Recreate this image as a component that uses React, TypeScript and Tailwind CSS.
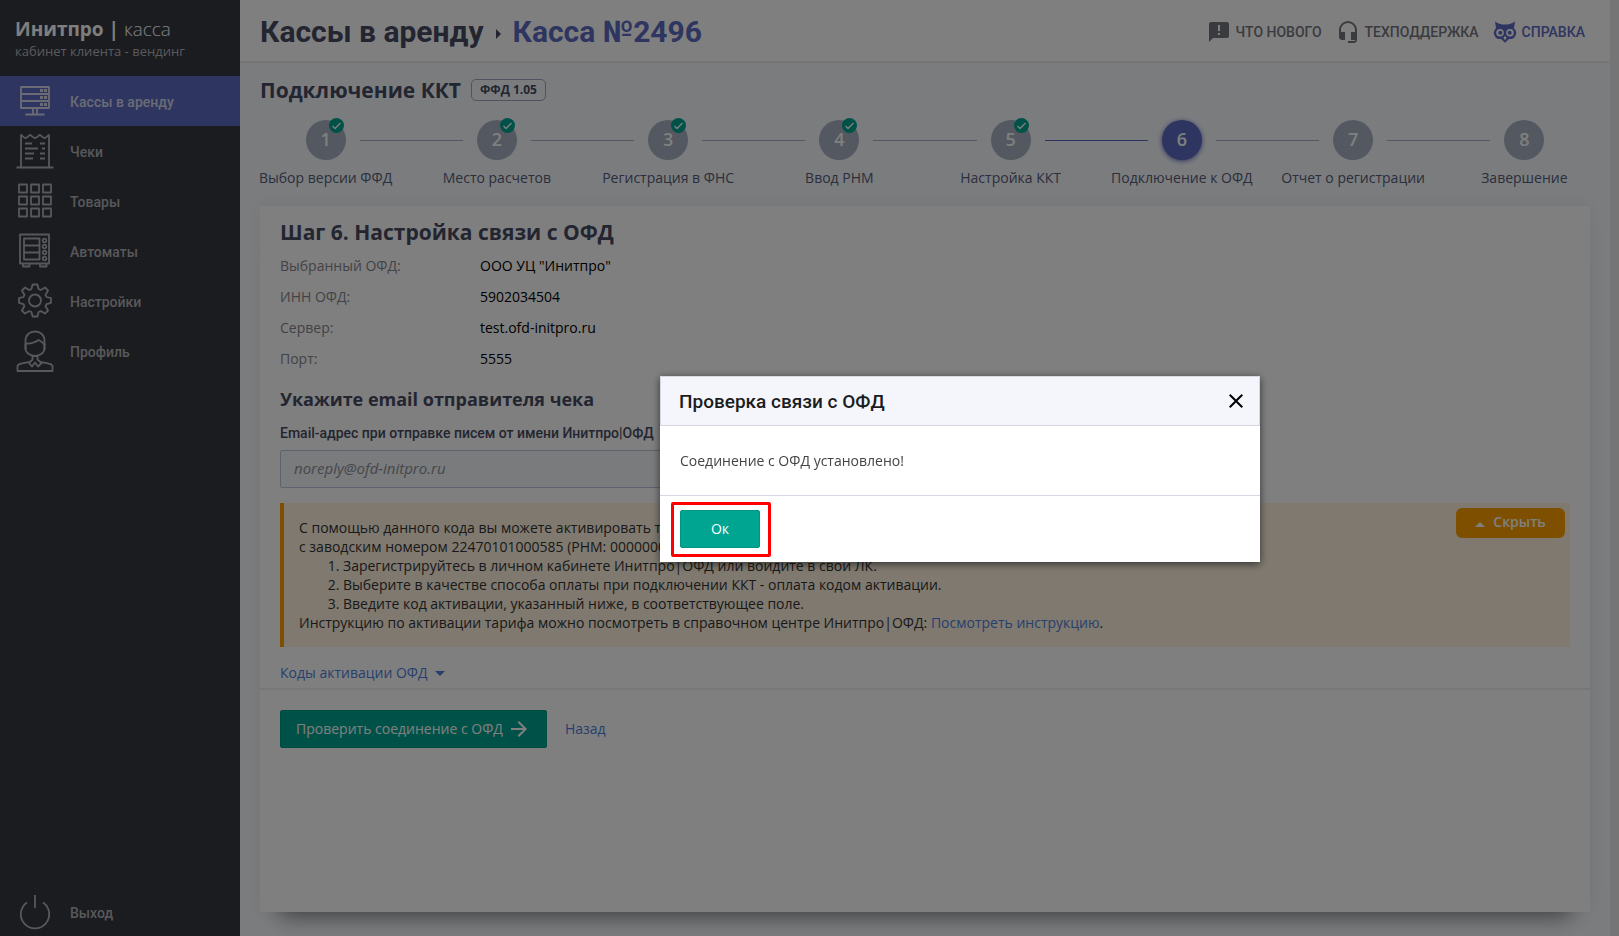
import type { ReactNode } from "react"
import { MdAnnouncement, MdArrowForward, MdClose, MdHeadsetMic } from "react-icons/md"

const steps = [
  "Выбор версии ФФД",
  "Место расчетов",
  "Регистрация в ФНС",
  "Ввод РНМ",
  "Настройка ККТ",
  "Подключение к ОФД",
  "Отчет о регистрации",
  "Завершение",
]
const currentStep = 6

const ofdInfo = [
  { label: "Выбранный ОФД:", value: 'ООО УЦ "Инитпро"' },
  { label: "ИНН ОФД:", value: "5902034504" },
  { label: "Сервер:", value: "test.ofd-initpro.ru" },
  { label: "Порт:", value: "5555" },
]

function MenuIcon({ children }: { children: ReactNode }) {
  return (
    <svg
      viewBox="0 0 40 42"
      className="h-[42px] w-10 shrink-0"
      fill="none"
      stroke="currentColor"
      strokeWidth="1.8"
      strokeLinejoin="round"
      aria-hidden="true"
    >
      {children}
    </svg>
  )
}

const menu = [
  {
    title: "Кассы в аренду",
    active: true,
    icon: (
      <MenuIcon>
        <path d="M6 7h28v21H6zM6 14h28M6 21h28M18 28v6M22 28v6M10.500 34.500h19" />
        <path d="M25 10.500h3M29 10.500h3M25 17.500h3M29 17.500h3M25 24.500h3M29 24.500h3" strokeWidth="3" />
      </MenuIcon>
    ),
  },
  {
    title: "Чеки",
    icon: (
      <MenuIcon>
        <path d="M6 37V5c1.500 0 2 3 4.500 3S13.500 5 15 5s2.500 3 5 3 3.500-3 5-3 2 3 4.500 3S32.500 5 34 5v32M1.500 37.500h37" />
        <path d="M10 13.500h7M10 18.500h13M10 23.500h9M10 28.500h8M25 13.500h5M27 18.500h3M25 23.500h5M25 28.500h5" />
      </MenuIcon>
    ),
  },
  {
    title: "Товары",
    icon: (
      <MenuIcon>
        <path d="M4 4.500h8v8H4zM16 4.500h8v8h-8zM28 4.500h8v8h-8zM4 16.500h8v8H4zM16 16.500h8v8h-8zM28 16.500h8v8h-8zM4 28.500h8v8H4zM16 28.500h8v8h-8zM28 28.500h8v8h-8z" />
      </MenuIcon>
    ),
  },
  {
    title: "Автоматы",
    icon: (
      <MenuIcon>
        <path d="M5 4.500h29v29H5zM9 8.500h15.500v21H9zM9 15.500h15.500M9 22.500h15.500M8 33.500v3h6.500v-3M25 33.500v3h6.500v-3" />
        <circle cx="29.500" cy="10.500" r="1.800" />
        <circle cx="29.500" cy="16.500" r="1.800" />
        <circle cx="29.500" cy="22.500" r="1.800" />
        <circle cx="29.500" cy="28.500" r="1.800" />
      </MenuIcon>
    ),
  },
  {
    title: "Настройки",
    icon: (
      <MenuIcon>
        <circle cx="20" cy="20.500" r="6" />
        <path d="M17.600 4.500h4.800l1.200 4.600 2.200.9 4.200-2.500 3.100 3.100-2.600 4.200 1 2.200 4.500 1.200v4.700l-4.500 1.200-1 2.200 2.600 4.200-3.200 3.100-4.100-2.500-2.200.9-1.200 4.500h-4.800l-1.200-4.500-2.200-.9-4.200 2.500-3.100-3.100 2.500-4.200-.9-2.200L4 22.900v-4.700l4.500-1.200.9-2.200-2.500-4.200L10 7.500l4.200 2.500 2.200-.9z" />
      </MenuIcon>
    ),
  },
  {
    title: "Профиль",
    icon: (
      <MenuIcon>
        <path d="M10.500 20V11c0-6 4-9.500 9.500-9.500s9.500 3.500 9.500 9.500v9" />
        <path d="M10.500 13.500C16 14 20 12.500 23.500 10c2 1 4.500 2 6 5M10.500 14v4.500c0 4 4.500 7.500 9.500 7.500s9.500-3.500 9.500-7.500V14M17.500 26v3.500L14 33l3 3.500 3-4 3 4 3.500-3.500-4-3.500V26M15 32C6 33.500 2.500 34 2.500 36.500V41h35v-4.500c0-2.500-3.500-3-12.500-4.500" />
      </MenuIcon>
    ),
  },
]

function OwlIcon() {
  return (
    <svg viewBox="0 0 24 24" className="size-6" fill="currentColor" aria-hidden="true">
      <path
        fillRule="evenodd"
        d="M2 1.500C5.500 4 9 4.500 12 4.500S18.500 4 22 1.500l-1 6.700A6.200 6.200 0 0 1 16 19l-4 3.800L8 19A6.200 6.200 0 0 1 3 8.200zM7 9a3.800 3.800 0 1 0 0 7.600A3.800 3.800 0 0 0 7 9zm10 0a3.800 3.800 0 1 0 0 7.600A3.800 3.800 0 0 0 17 9zm-5 7l-1.700 2 1.700 2 1.700-2z"
      />
      <circle cx="7.300" cy="12.800" r="2" />
      <circle cx="16.700" cy="12.800" r="2" />
    </svg>
  )
}

function Sidebar() {
  return (
    <aside className="flex w-60 shrink-0 flex-col bg-[#363840] font-['Roboto',sans-serif] text-sm font-medium">
      <div className="h-[76px] pl-[15px] pt-[17px] font-['Open_Sans',sans-serif]">
        <p className="text-[19px] leading-6 font-bold text-white">
          Инитпро | <span className="font-light">касса</span>
        </p>
        <p className="text-[13px] leading-5 font-normal text-[#b4b5ba]">кабинет клиента - вендинг</p>
      </div>
      <nav>
        {menu.map((item) => (
          <a
            key={item.title}
            href="#"
            className={`flex h-[50px] items-center gap-[15px] pl-[15px] ${
              item.active ? "bg-[#5c6bc0] text-[#d4d7ea]" : "text-[#b0b1b5]"
            }`}
          >
            {item.icon}
            <span className="pt-0.5">{item.title}</span>
          </a>
        ))}
      </nav>
      <a href="#" className="mt-auto flex h-12 items-center gap-[15px] pl-[15px] text-[#b0b1b5]">
        <MenuIcon>
          <path d="M12 11.500A14.200 14.200 0 1 0 28 11.500M20 4v13" />
        </MenuIcon>
        <span className="pt-0.5">Выход</span>
      </a>
    </aside>
  )
}

function Header() {
  return (
    <header className="flex h-[63px] items-center justify-between border-b-2 border-[#ececec] bg-white pt-0.5 pr-[25px] pl-5 font-['Roboto',sans-serif]">
      <h1 className="flex items-center gap-3 text-3xl font-bold text-[#474b62]">
        Кассы в аренду
        <svg viewBox="0 0 5 10" className="mt-1 h-2.5 w-[5px]" fill="currentColor" aria-hidden="true">
          <path d="M0 0l5 5-5 5z" />
        </svg>
        <span className="text-[#5c6bc0]">Касса №2496</span>
      </h1>
      <nav className="flex items-center gap-3.5 text-sm font-medium text-[#75777f]">
        <a href="#" className="flex items-center gap-[5px]">
          <MdAnnouncement className="size-6" />
          ЧТО НОВОГО
        </a>
        <a href="#" className="flex items-center gap-[5px]">
          <MdHeadsetMic className="size-6" />
          ТЕХПОДДЕРЖКА
        </a>
        <a href="#" className="flex items-center gap-[5px] text-[#5c6bc0]">
          <OwlIcon />
          СПРАВКА
        </a>
      </nav>
    </header>
  )
}

function Stepper() {
  return (
    <ol className="mt-[17px] grid grid-cols-8">
      {steps.map((title, i) => {
        const n = i + 1
        return (
          <li key={title} className="flex flex-col items-center">
            <div className="flex w-full items-center">
              <span
                className={`h-px flex-1 ${
                  n === 1 ? "bg-transparent" : n === currentStep ? "bg-[#5c6bc0]" : "bg-[#a9b0c9]"
                }`}
              />
              <span
                className={`relative mx-3.5 flex size-10 items-center justify-center rounded-full pb-0.5 text-lg font-semibold text-white ${
                  n === currentStep ? "bg-[#5c6bc0] shadow-[0_1px_5px_#5c6bc0]" : "bg-[#a8b0c3]"
                }`}
              >
                {n}
                {n < currentStep && (
                  <svg viewBox="0 0 15 15" className="absolute -top-0.5 right-0.5 size-[15px]" aria-hidden="true">
                    <circle cx="7.500" cy="7.500" r="7.500" fill="#00a591" />
                    <path d="M3.500 8l2.500 2.500L11.500 5" fill="none" stroke="#fff" strokeWidth="1.300" />
                  </svg>
                )}
              </span>
              <span
                className={`h-px flex-1 ${
                  n === steps.length ? "bg-transparent" : n === currentStep - 1 ? "bg-[#5c6bc0]" : "bg-[#a9b0c9]"
                }`}
              />
            </div>
            <span className="mt-2 text-sm text-[#565d78]">{title}</span>
          </li>
        )
      })}
    </ol>
  )
}

function ActivationNotice() {
  return (
    <div className="mt-[15px] flex items-start border-l-4 border-[#ff9f00] bg-[#fff3e0]">
      <div className="flex-1 py-[15px] pl-[15px] leading-[19px] text-[#333]">
        <p>
          С помощью данного кода вы можете активировать тариф
          <br />
          с заводским номером 22470101000585 (РНМ: 000000000)
        </p>
        <ol className="list-decimal pl-11">
          <li>Зарегистрируйтесь в личном кабинете Инитпро|ОФД или войдите в свой ЛК.</li>
          <li>Выберите в качестве способа оплаты при подключении ККТ - оплата кодом активации.</li>
          <li>Введите код активации, указанный ниже, в соответствующее поле.</li>
        </ol>
        <p>
          Инструкцию по активации тарифа можно посмотреть в справочном центре Инитпро|ОФД:{" "}
          <a href="#" className="text-[#4f7fdb]">
            Посмотреть инструкцию
          </a>
          .
        </p>
      </div>
      <button
        type="button"
        className="m-[5px] flex h-[30px] w-[109px] items-center justify-center gap-2 rounded-md bg-[#ff9f00] pb-0.5 font-semibold text-white"
      >
        <svg viewBox="0 0 10 5" className="mt-1 h-[5px] w-2.5" fill="currentColor" aria-hidden="true">
          <path d="M0 5l5-5 5 5z" />
        </svg>
        Скрыть
      </button>
    </div>
  )
}

function ConnectionDialog() {
  return (
    <div className="fixed inset-0 flex items-center justify-center bg-black/50 pt-0.5 pl-[301px]">
      <div
        role="dialog"
        aria-modal="true"
        aria-labelledby="dialog-title"
        className="w-[600px] bg-white shadow-[0_2px_8px_rgba(0,0,0,0.6)]"
      >
        <div className="flex h-[50px] items-center justify-between border border-[#d6d8e4] bg-[#f4f6fb] pr-[11px] pl-[18px]">
          <h2 id="dialog-title" className="pt-0.5 font-['Roboto',sans-serif] text-[19px] font-medium text-[#1b1c20]">
            Проверка связи с ОФД
          </h2>
          <button type="button" aria-label="Закрыть">
            <MdClose className="size-6 text-black" />
          </button>
        </div>
        <p className="flex h-[70px] items-center border-b border-[#d6d8e4] px-5 text-[#444]">
          Соединение с ОФД установлено!
        </p>
        <div className="px-5 py-3.5">
          <div className="relative w-20">
            <button
              type="button"
              className="h-[38px] w-20 rounded-xs border border-[#009482] bg-[#00a591] text-white"
            >
              Ок
            </button>
            <span className="pointer-events-none absolute -top-2 -right-[11px] -bottom-[9px] -left-[9px] rounded-xs border-3 border-[#ff0000]" />
          </div>
        </div>
      </div>
    </div>
  )
}

export default function App() {
  return (
    <div className="flex min-h-screen font-['Open_Sans',sans-serif] text-sm">
      <Sidebar />
      <div className="flex min-w-0 flex-1 flex-col bg-[#f6f9fd]">
        <Header />
        <div className="mt-3.5 flex items-center gap-2.5 px-5">
          <h2 className="text-[21px] leading-[26px] font-bold text-[#474b62]">Подключение ККТ</h2>
          <span className="rounded-[5px] border border-[#a0a5bb] px-2 text-xs leading-5 font-bold text-[#474b62]">
            ФФД 1.05
          </span>
        </div>
        <Stepper />
        <main className="mx-5 mt-[18px] mb-6 flex-1 bg-white shadow-[0_25px_20px_-20px_rgba(0,0,0,0.45),0_0_20px_rgba(0,0,0,0.06)]">
          <div className="border-b-2 border-[#efeff1] px-5 pt-[11px] pb-[5px]">
            <h2 className="text-[21px] leading-[30px] font-bold text-[#474b62]">Шаг 6. Настройка связи с ОФД</h2>
            <dl className="mt-[3px]">
              {ofdInfo.map((row) => (
                <div key={row.label} className="flex leading-[31px]">
                  <dt className="w-[200px] text-[#85868c]">{row.label}</dt>
                  <dd className="text-black">{row.value}</dd>
                </div>
              ))}
            </dl>
            <h3 className="mt-[9px] text-lg leading-8 font-bold text-[#474b62]">Укажите email отправителя чека</h3>
            <label
              htmlFor="sender-email"
              className="mt-2 block font-['Roboto',sans-serif] leading-5 font-medium text-[#474b62]"
            >
              Email-адрес при отправке писем от имени Инитпро|ОФД
            </label>
            <input
              id="sender-email"
              type="email"
              placeholder="noreply@ofd-initpro.ru"
              className="mt-[7px] block h-[38px] w-[620px] rounded-xs border border-[#b9c4dc] bg-[#f4f6fb] px-[13px] pb-0.5 text-[15px] placeholder:text-[#8d8e96] placeholder:italic"
            />
            <ActivationNotice />
            <button type="button" className="mt-4 flex items-center gap-[7px] text-[#4f7fdb]">
              Коды активации ОФД
              <svg viewBox="0 0 10 5" className="h-[5px] w-2.5" fill="currentColor" aria-hidden="true">
                <path d="M0 0h10L5 5z" />
              </svg>
            </button>
          </div>
          <div className="flex items-center gap-[18px] px-5 py-5">
            <button
              type="button"
              className="flex h-[38px] items-center gap-1 rounded-xs border border-[#009482] bg-[#00a591] px-[15px] text-white"
            >
              Проверить соединение с ОФД
              <MdArrowForward className="size-6" />
            </button>
            <a href="#" className="text-[#4f7fdb]">
              Назад
            </a>
          </div>
        </main>
      </div>
      <div className="w-[9px] shrink-0 bg-[#ebebeb]" />
      <ConnectionDialog />
    </div>
  )
}
